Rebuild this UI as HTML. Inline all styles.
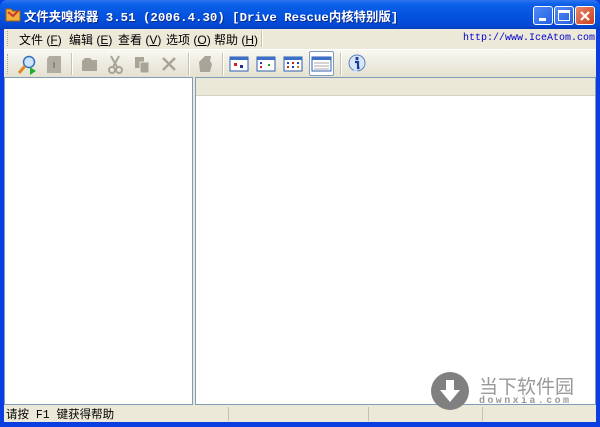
<!DOCTYPE html>
<html><head><meta charset="utf-8"><style>
*{margin:0;padding:0;box-sizing:border-box}
body{width:600px;height:427px;overflow:hidden;background:#0a3ee0;font-family:"Liberation Sans","Noto Sans CJK SC",sans-serif;position:relative}
.abs{position:absolute}
#title{left:0;top:0;width:600px;height:30px;background:linear-gradient(#2f74f0 0%,#0b5fe8 15%,#0454e0 50%,#0448d4 85%,#033ab8 100%);border-radius:7px 7px 0 0}
#ttext{left:24px;top:7px;color:#fff;font-family:"Liberation Mono","Noto Sans CJK SC",monospace;font-weight:bold;font-size:12.4px;white-space:nowrap;text-shadow:1px 1px #0a2a8a}
.btn{top:6px;width:20px;height:19px;border:1px solid #fff;border-radius:3px;background:linear-gradient(135deg,#4f8bf8,#2660e0)}
#client{left:4px;top:29px;width:592px;height:393px;background:#ece9d8}
#menu{left:0;top:0;width:592px;height:19px;font-size:12px;color:#000}
#menu span{position:absolute;top:2px;white-space:nowrap}
#tb{left:0;top:20px;width:592px;height:28px;background:linear-gradient(#f8f7f1,#e4e1d0);border-top:1px solid #fff}
.sep{position:absolute;top:3px;width:2px;height:22px;border-left:1px solid #c5c2b2;border-right:1px solid #fff}
#left{left:0;top:48px;width:189px;height:328px;background:#fff;border:1px solid #7f9db9}
#right{left:191px;top:48px;width:401px;height:328px;background:#fff;border:1px solid #7f9db9}
#hdr{left:0;top:0;width:399px;height:18px;background:#ebe8d7;border-bottom:1px solid #d6d2c2}
#status{left:0;top:376px;width:592px;height:17px;font-size:12px}
</style></head><body>
<div id="title" class="abs"></div>
<svg class="abs" style="left:5px;top:7px" width="16" height="15" viewBox="0 0 16 15"><path d="M1 2h5l2 2h7v10H1z" fill="#f0b040" stroke="#a06010"/><path d="M3 5l5 4 5-5" stroke="#c33" fill="none" stroke-width="2"/></svg>
<div id="ttext" class="abs">文件夹嗅探器 3.51 (2006.4.30) [Drive Rescue内核特别版]</div>
<div class="btn abs" style="left:533px"><div class="abs" style="left:5px;top:11px;width:7px;height:3px;background:#fff"></div></div>
<div class="btn abs" style="left:554px"><div class="abs" style="left:3px;top:3px;width:12px;height:11px;border:1px solid #fff;border-top:3px solid #fff"></div></div>
<div class="btn abs" style="left:575px;background:linear-gradient(135deg,#e9866a,#c9401e)"><svg class="abs" style="left:3px;top:3px" width="12" height="12"><path d="M2 2L10 10M10 2L2 10" stroke="#fff" stroke-width="2.2"/></svg></div>
<div id="client" class="abs">
 <div id="menu" class="abs">
  <div class="abs" style="left:3px;top:2px;width:2px;height:15px;border-left:1px dotted #a8a594"></div>
  <span style="left:15px">文件 (<u>F</u>)</span>
  <span style="left:65px">编辑 (<u>E</u>)</span>
  <span style="left:114px">查看 (<u>V</u>)</span>
  <span style="left:162px">选项 (<u>O</u>)</span>
  <span style="left:210px">帮助 (<u>H</u>)</span>
  <div class="abs" style="left:257px;top:1px;width:2px;height:17px;border-left:1px solid #c5c2b2;border-right:1px solid #fff"></div>
  <span style="left:459px;color:#0000d0;font-family:'Liberation Mono',monospace;font-size:10px;top:4px">http://www.IceAtom.com</span>
 </div>
 <div id="tb" class="abs">
  <div class="abs" style="left:3px;top:4px;width:2px;height:20px;border-left:1px dotted #a8a594"></div>
  <svg class="abs" style="left:12px;top:4px" width="22" height="22"><circle cx="13" cy="8" r="5.5" fill="#cfe4fb" stroke="#3470c0" stroke-width="1.5"/><path d="M9 12L3 19" stroke="#e08a20" stroke-width="3"/><path d="M14 13v8l6-4z" fill="#20b030"/></svg>
  <svg class="abs" style="left:40px;top:4px" width="20" height="20"><path d="M5 2h12v17H3V5z" fill="#b0aca0"/><path d="M10 8v6" stroke="#888" stroke-width="2"/></svg>
  <div class="sep" style="left:67px"></div>
  <svg class="abs" style="left:75px;top:5px" width="20" height="18"><path d="M3 6l3-3h5l2 2h5v11H3z" fill="#a8a498"/></svg>
  <svg class="abs" style="left:102px;top:4px" width="18" height="20"><path d="M5 2l6 11M13 2L7 13" stroke="#a8a498" stroke-width="2"/><circle cx="6" cy="16" r="3" fill="none" stroke="#a8a498" stroke-width="2"/><circle cx="13" cy="16" r="3" fill="none" stroke="#a8a498" stroke-width="2"/></svg>
  <svg class="abs" style="left:128px;top:4px" width="20" height="20"><rect x="3" y="3" width="9" height="11" fill="#a8a498"/><rect x="8" y="8" width="9" height="11" fill="#a8a498" stroke="#ece9d8"/></svg>
  <svg class="abs" style="left:155px;top:4px" width="20" height="20"><path d="M4 4L16 16M16 4L4 16" stroke="#a8a498" stroke-width="2.5"/></svg>
  <div class="sep" style="left:184px"></div>
  <svg class="abs" style="left:191px;top:4px" width="20" height="20"><path d="M4 8l6-6h6l-1 5 2 3-2 8H5z" fill="#a8a498"/></svg>
  <div class="sep" style="left:218px"></div>
  <svg class="abs" style="left:225px;top:5px" width="20" height="18"><rect x="1" y="2" width="18" height="14" fill="#fff" stroke="#2e5fb0"/><rect x="1" y="2" width="18" height="3" fill="#3c6fc8"/><rect x="5" y="8" width="3" height="3" fill="#d02020"/><rect x="11" y="10" width="3" height="3" fill="#203090"/></svg>
  <svg class="abs" style="left:252px;top:5px" width="20" height="18"><rect x="1" y="2" width="18" height="14" fill="#fff" stroke="#2e5fb0"/><rect x="1" y="2" width="18" height="3" fill="#3c6fc8"/><rect x="4" y="7" width="2" height="2" fill="#2040c0"/><rect x="4" y="11" width="2" height="2" fill="#d02020"/><rect x="12" y="9" width="2" height="2" fill="#20a020"/></svg>
  <svg class="abs" style="left:279px;top:5px" width="20" height="18"><rect x="1" y="2" width="18" height="14" fill="#fff" stroke="#2e5fb0"/><rect x="1" y="2" width="18" height="3" fill="#3c6fc8"/><g fill="#2040c0"><rect x="4" y="7" width="2" height="2"/><rect x="9" y="7" width="2" height="2" fill="#d02020"/><rect x="14" y="7" width="2" height="2"/><rect x="4" y="11" width="2" height="2" fill="#d02020"/><rect x="9" y="11" width="2" height="2"/><rect x="14" y="11" width="2" height="2" fill="#c08020"/></g></svg>
  <div class="abs" style="left:305px;top:1px;width:25px;height:25px;border:1px solid #7f9db9;border-radius:2px;background:#fff"></div>
  <svg class="abs" style="left:307px;top:5px" width="21" height="18"><rect x="1" y="2" width="19" height="14" fill="#fff" stroke="#2e5fb0"/><rect x="1" y="2" width="19" height="3" fill="#3c6fc8"/><path d="M3 8h15M3 11h15M3 14h15" stroke="#aaa"/></svg>
  <div class="sep" style="left:336px"></div>
  <svg class="abs" style="left:343px;top:3px" width="20" height="22"><circle cx="10" cy="10" r="8" fill="#d8e6f8" stroke="#5a82c0"/><path d="M7 17l-2 4 6-3z" fill="#d8e6f8"/><circle cx="10" cy="5.5" r="1.6" fill="#1a3f9a"/><path d="M8 9h3v6h1.5" stroke="#1a3f9a" stroke-width="2.2" fill="none"/></svg>
 </div>
 <div id="left" class="abs"></div>
 <div id="right" class="abs"><div id="hdr" class="abs"></div></div>
 <div id="status" class="abs">
  <span class="abs" style="left:2px;top:1px;white-space:nowrap;font-family:'Liberation Mono','Noto Sans CJK SC',monospace;font-size:11.5px">请按 F1 键获得帮助</span>
  <div class="abs" style="left:224px;top:2px;width:1px;height:14px;background:#c5c2b2"></div>
  <div class="abs" style="left:364px;top:2px;width:1px;height:14px;background:#c5c2b2"></div>
  <div class="abs" style="left:478px;top:2px;width:1px;height:14px;background:#c5c2b2"></div>
 </div>
</div>
<svg class="abs" style="left:430px;top:371px" width="40" height="40"><circle cx="20" cy="20" r="19" fill="#808080"/><path d="M16 9h8v10h6L20 31 10 19h6z" fill="#fff"/></svg>
<div class="abs" style="left:479px;top:372px;font-size:19px;color:#999;letter-spacing:0px;white-space:nowrap">当下软件园</div>
<div class="abs" style="left:479px;top:396px;font-size:10px;color:#999;font-weight:bold;letter-spacing:2.4px;font-family:'Liberation Mono',monospace">downxia.com</div>
</body></html>
